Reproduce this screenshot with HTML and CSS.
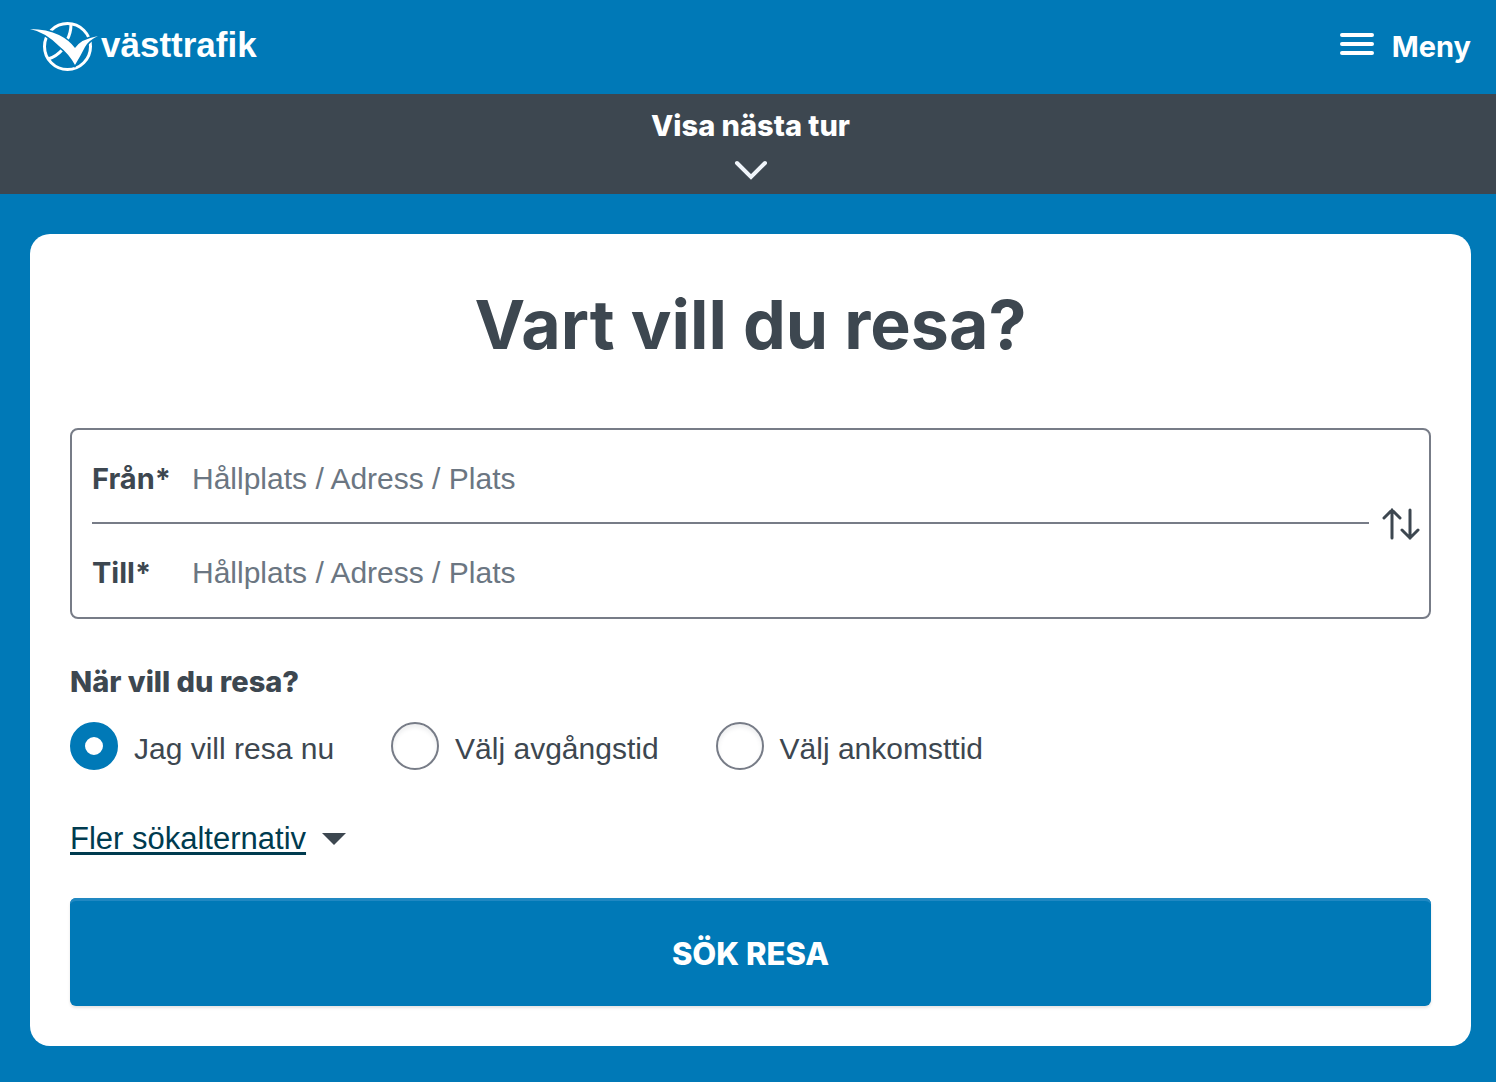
FILE: index.html
```html
<!DOCTYPE html>
<html lang="sv">
<head>
<meta charset="utf-8">
<meta name="viewport" content="width=device-width, initial-scale=1">
<title>Västtrafik</title>
<link rel="stylesheet" href="styles.css">
</head>
<body>
<header class="header">
  <a class="logo" href="#">
    <svg class="logo-mark" viewBox="0 0 68 50" aria-hidden="true">
      <g fill="none" stroke="#fff" stroke-width="3">
        <circle cx="37.5" cy="24.5" r="23"/>
        <path d="M41 2Q41 11 37 18M18 37Q26 35 33 27"/>
      </g>
      <path fill="#fff" stroke="#0079b7" stroke-width="3" paint-order="stroke" d="M0 7Q17 7 29 13Q39 18 45 26Q51 17 68 14Q59 18 55 25Q51 33 45 43Q39 32 29 24Q15 10 0 7Z"/>
    </svg>
    <span class="logo-text">västtrafik</span>
  </a>
  <button class="menu" type="button">
    <svg class="menu-icon" viewBox="0 0 34 24" aria-hidden="true">
      <path d="M2 3H32M2 12H32M2 21H32" stroke="#fff" stroke-width="4" stroke-linecap="round"/>
    </svg>
    Meny
  </button>
</header>
<button class="next-trip" type="button">
  Visa nästa tur
  <svg class="chevron" viewBox="0 0 34 20" aria-hidden="true">
    <path d="M3 3L17 17L31 3" fill="none" stroke="#f0f5fa" stroke-width="4" stroke-linecap="round"/>
  </svg>
</button>
<main class="main">
  <form class="card">
    <h1 class="title">Vart vill du resa?</h1>
    <div class="stops">
      <div class="fields">
        <div class="field">
          <label class="field-label" for="from">Från*</label>
          <input class="field-input" id="from" type="text" placeholder="Hållplats / Adress / Plats">
        </div>
        <div class="field">
          <label class="field-label" for="to">Till*</label>
          <input class="field-input" id="to" type="text" placeholder="Hållplats / Adress / Plats">
        </div>
      </div>
      <button class="swap" type="button" aria-label="Byt plats på från och till">
        <svg class="swap-icon" viewBox="0 0 38 34" aria-hidden="true">
          <path d="M10 31V3M2 11L10 3L18 11M28 3V31M20 23L28 31L36 23" fill="none" stroke="#3d4750" stroke-width="3" stroke-linecap="round"/>
        </svg>
      </button>
    </div>
    <fieldset class="when">
      <legend class="when-title">När vill du resa?</legend>
      <div class="options">
        <label class="option"><input class="radio" type="radio" name="when" checked><span class="option-text">Jag vill resa nu</span></label>
        <label class="option"><input class="radio" type="radio" name="when"><span class="option-text">Välj avgångstid</span></label>
        <label class="option"><input class="radio" type="radio" name="when"><span class="option-text">Välj ankomsttid</span></label>
      </div>
    </fieldset>
    <a class="more" href="#"><span class="more-text">Fler sökalternativ</span>
      <svg class="caret" viewBox="0 0 24 12" aria-hidden="true"><path d="M0 0H24L12 12Z" fill="#3d4750"/></svg>
    </a>
    <button class="submit" type="submit">SÖK RESA</button>
  </form>
</main>
</body>
</html>
```
FILE: styles.css
```css
* { box-sizing: border-box; }

body {
  margin: 0;
  min-height: 100vh;
  background: #0079b7;
  color: #3d4750;
  font: 30px/40px "Liberation Sans", sans-serif;
}

button, input {
  font: inherit;
  color: inherit;
  border: 0;
  padding: 0;
  background: none;
}

svg { display: block; flex: none; }

.title, .menu, .next-trip, .field-label, .when-title, .submit {
  font-family: Inter, "Liberation Sans", sans-serif;
  font-size: 29px;
  font-weight: 700;
}

.header {
  display: flex;
  align-items: center;
  justify-content: space-between;
  height: 94px;
  padding: 0 25px 0 30px;
  color: #fff;
}

.logo {
  display: flex;
  align-items: center;
  gap: 3px;
  color: #fff;
  text-decoration: none;
}

.logo-mark { width: 68px; height: 50px; }

.logo-text {
  padding-bottom: 4px;
  font-weight: 700;
  font-size: 35px;
}

.menu {
  display: flex;
  align-items: center;
  gap: 18px;
}

.menu-icon { width: 34px; height: 24px; margin-bottom: 6px; }

.next-trip {
  display: flex;
  flex-direction: column;
  align-items: center;
  gap: 14px;
  width: 100%;
  height: 100px;
  padding: 12px 25px 0 30px;
  background: #3d4750;
  color: #fff;
  font-weight: 800;
}

.chevron { width: 34px; height: 20px; }

.main { padding: 40px 25px 36px 30px; }

.card {
  padding: 40px;
  border-radius: 20px;
  background: #fff;
}

.title {
  margin: 0 0 54px;
  font-size: 68px;
  line-height: 100px;
  text-align: center;
}

.stops {
  display: flex;
  align-items: center;
  border: 2px solid #777c87;
  border-radius: 8px;
  padding: 0 9px 0 20px;
}

.fields { flex: 1; }

.field {
  display: flex;
  align-items: center;
  height: 92px;
  padding-top: 5px;
}

.field + .field {
  height: 95px;
  padding-top: 4px;
  border-top: 2px solid #777c87;
}

.field-label { width: 100px; }

.field-input { flex: 1; min-width: 0; outline: 0; }

.field-input::placeholder { color: #6b7682; opacity: 1; }

.swap { margin-left: 13px; }

.swap-icon { width: 38px; height: 34px; }

.when {
  margin: 43px 0 0;
  padding: 0;
  border: 0;
}

.when-title { padding: 0; font-weight: 800; }

.options {
  display: flex;
  flex-wrap: wrap;
  gap: 20px 57px;
  margin-top: 20px;
}

.option { display: flex; align-items: center; gap: 16px; }

.option-text { padding-top: 5px; }

.radio {
  appearance: none;
  width: 48px;
  height: 48px;
  margin: 0;
  border: 2px solid #777c87;
  border-radius: 50%;
  background: #fff;
  box-shadow: inset 0 3px 4px #3d475018;
}

.radio:checked { border: 15px solid #0079b7; box-shadow: none; }

.more {
  display: flex;
  align-items: center;
  gap: 16px;
  width: fit-content;
  margin-top: 49px;
  color: #003b4f;
  font-size: 31px;
  text-decoration: none;
}

.more-text {
  text-decoration: underline;
  text-decoration-thickness: 3px;
  text-underline-offset: 3px;
  text-decoration-skip-ink: none;
}

.caret { width: 24px; height: 12px; }

.submit {
  display: block;
  width: 100%;
  height: 108px;
  margin-top: 39px;
  padding-top: 4px;
  border-radius: 6px;
  background: #0079b7;
  box-shadow: inset 0 4px 0 -1px #2088c2, 0 2px 3px #0000001c;
  color: #fff;
  font-size: 31px;
  font-weight: 800;
}
```
